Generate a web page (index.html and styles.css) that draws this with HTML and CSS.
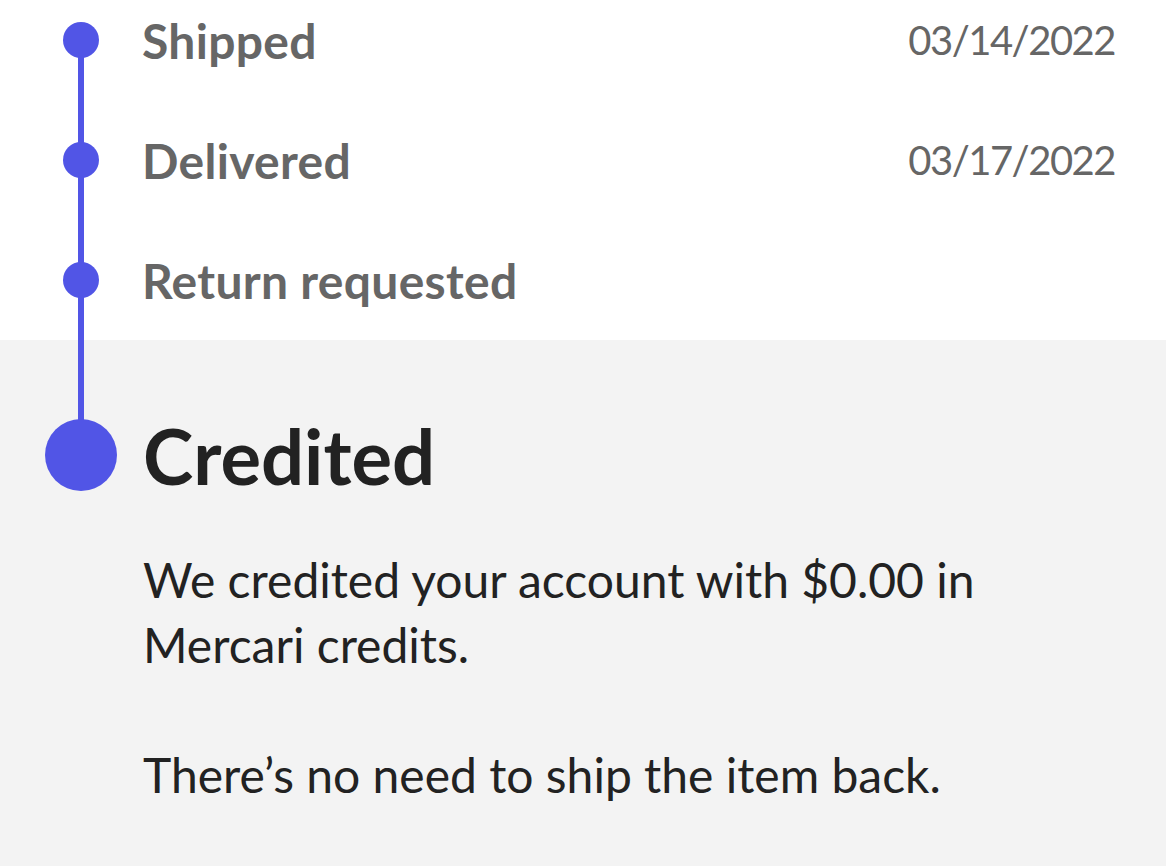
FILE: index.html
```
<!DOCTYPE html>
<html lang="en">
<head>
    <meta charset="UTF-8">
    <title>Order status</title>
    <link rel="stylesheet" href="styles.css">
</head>
<body>

    <div id="timeline">
        <div class="past">
            <div class="step">
                <span class="dot"></span>
                <span class="label">Shipped</span>
                <span class="date">03/14/2022</span>
            </div>
            <div class="step">
                <span class="dot"></span>
                <span class="label">Delivered</span>
                <span class="date">03/17/2022</span>
            </div>
            <div class="step last">
                <span class="dot"></span>
                <span class="label">Return requested</span>
            </div>
        </div>
        <div class="current">
            <div class="head">
                <span class="bigdot"></span>
                <h1>Credited</h1>
            </div>
            <div class="msg">
                <p>We credited your account with $0.00 in Mercari credits.</p>
                <p>There’s no need to ship the item back.</p>
            </div>
        </div>
    </div>

</body>
</html>
```
FILE: styles.css
```
*{
    margin: 0;
    padding: 0;
}
body{
    font-family: Lato, "Open Sans", sans-serif;
    background: #f3f3f3;
}
#timeline{
    width: 1166px;
}
.past{
    background: #fff;
    height: 340px;
}
.step{
    position: relative;
    display: flex;
    align-items: center;
    height: 80px;
    margin-bottom: 40px;
    padding-right: 51px;
}
.step .dot{
    width: 36px;
    height: 36px;
    border-radius: 50%;
    background: #5155e6;
    margin-left: 63px;
    margin-right: 43px;
    flex-shrink: 0;
}
/* connector to the next dot */
.step::after{
    content: "";
    position: absolute;
    left: 78px;
    top: 40px;
    width: 6px;
    height: 120px;
    background: #5155e6;
    z-index: 1;
}
.step.last::after{
    height: 175px;
}
.label{
    flex: 1;
    font-size: 48px;
    font-weight: 700;
    letter-spacing: 0.3px;
    color: #666;
}
.date{
    font-size: 40px;
    letter-spacing: -1.5px;
    color: #666;
}
.current{
    background: #f3f3f3;
    padding-top: 79px;
}
.head{
    display: flex;
    align-items: center;
    height: 72px;
}
.bigdot{
    position: relative;
    z-index: 2;
    width: 72px;
    height: 72px;
    border-radius: 50%;
    background: #5155e6;
    margin-left: 45px;
    margin-right: 26px;
}
h1{
    font-size: 76px;
    font-weight: 700;
    color: #222;
}
.msg{
    padding: 56px 150px 20px 143px;
    font-size: 48px;
    line-height: 65px;
    color: #222;
}
.msg p{
    margin-bottom: 65px;
}
.msg p:last-child{
    margin-bottom: 0;
}
```
